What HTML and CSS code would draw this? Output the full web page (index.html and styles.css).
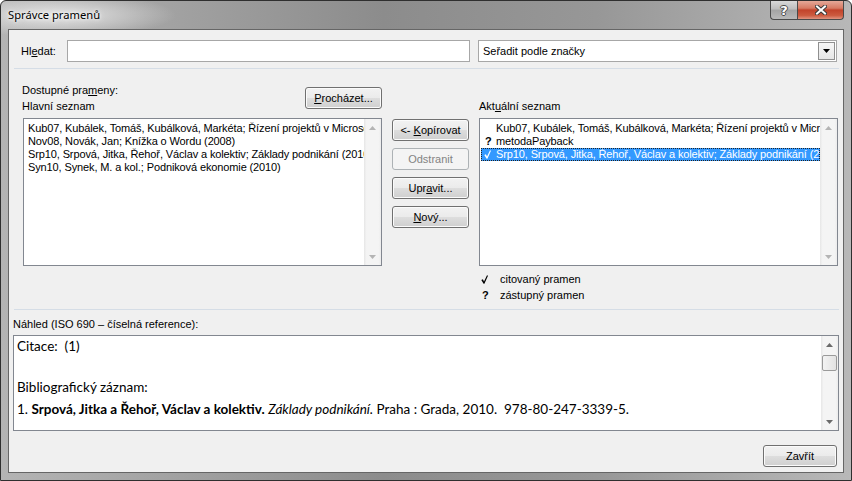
FILE: index.html
```html
<!DOCTYPE html>
<html lang="cs">
<head>
<meta charset="utf-8">
<title>Správce pramenů</title>
<link rel="stylesheet" href="styles.css">
</head>
<body>
<div class="window">
  <div class="titlebar">
    <span class="title">Správce pramenů</span>
    <div class="caption-buttons">
      <span class="cap help">?</span>
      <span class="cap close">
        <svg width="12" height="10" viewBox="0 0 12 10"><path d="M2 1.5 L10 8.5 M10 1.5 L2 8.5" stroke="#3a3a3a" stroke-width="4" stroke-linecap="square"/><path d="M2 1.5 L10 8.5 M10 1.5 L2 8.5" stroke="#ffffff" stroke-width="2" stroke-linecap="square"/></svg>
      </span>
    </div>
  </div>
  <div class="client">
    <div class="search-row">
      <label class="lbl">Hl<u>e</u>dat:</label>
      <div class="textbox search"></div>
      <div class="combo">
        <span class="combo-text">Seřadit podle značky</span>
        <span class="combo-btn"><svg width="7" height="4" viewBox="0 0 7 4"><path d="M0 0 H7 L3.5 4 Z" fill="#000"/></svg></span>
      </div>
    </div>
    <div class="sep"></div>
    <div class="sources">
      <div class="col left-col">
        <div class="col-head">
          <div class="labels">
            <div>Dostupné pra<u>m</u>eny:</div>
            <div>Hlavní seznam</div>
          </div>
          <button class="btn browse"><span><u>P</u>rocházet...</span></button>
        </div>
        <div class="listbox">
          <div class="items plain">
            <div class="item">Kub07, Kubálek, Tomáš, Kubálková, Markéta; Řízení projektů v Microsoft Project</div>
            <div class="item">Nov08, Novák, Jan; Knížka o Wordu (2008)</div>
            <div class="item">Srp10, Srpová, Jitka, Řehoř, Václav a kolektiv; Základy podnikání (2010)</div>
            <div class="item">Syn10, Synek, M. a kol.; Podniková ekonomie (2010)</div>
          </div>
          <div class="vscroll">
            <span class="arrow"><svg width="7" height="4" viewBox="0 0 7 4"><path d="M3.5 0 L7 4 H0 Z" fill="#b4b4b4"/></svg></span>
            <span class="track"></span>
            <span class="arrow"><svg width="7" height="4" viewBox="0 0 7 4"><path d="M0 0 H7 L3.5 4 Z" fill="#b4b4b4"/></svg></span>
          </div>
        </div>
      </div>
      <div class="actions">
        <button class="btn"><span>&lt;-&nbsp;<u>K</u>opírovat</span></button>
        <button class="btn disabled">Odstranit</button>
        <button class="btn"><span>Upr<u>a</u>vit...</span></button>
        <button class="btn"><span><u>N</u>ový...</span></button>
      </div>
      <div class="col right-col">
        <div class="col-head">
          <div class="labels">
            <div>Akt<u>u</u>ální seznam</div>
          </div>
        </div>
        <div class="listbox">
          <div class="items marked">
            <div class="item"><span class="mark"></span><span class="txt">Kub07, Kubálek, Tomáš, Kubálková, Markéta; Řízení projektů v Microsoft Project</span></div>
            <div class="item"><span class="mark q">?</span><span class="txt">metodaPayback</span></div>
            <div class="item selected"><span class="mark"><svg width="7" height="9" viewBox="0 0 7 9"><path d="M0.3 5 L1.9 4.2 L3 6.4 L6 0.3 L7 0.8 L3.4 8.8 L2.6 8.8 Z" fill="#fff"/></svg></span><span class="txt">Srp10, Srpová, Jitka, Řehoř, Václav a kolektiv; Základy podnikání (2010)</span></div>
          </div>
          <div class="vscroll">
            <span class="arrow"><svg width="7" height="4" viewBox="0 0 7 4"><path d="M3.5 0 L7 4 H0 Z" fill="#b4b4b4"/></svg></span>
            <span class="track"></span>
            <span class="arrow"><svg width="7" height="4" viewBox="0 0 7 4"><path d="M0 0 H7 L3.5 4 Z" fill="#b4b4b4"/></svg></span>
          </div>
        </div>
        <div class="legend">
          <div class="legend-row"><span class="mark"><svg width="7" height="9" viewBox="0 0 7 9"><path d="M0.3 5 L1.9 4.2 L3 6.4 L6 0.3 L7 0.8 L3.4 8.8 L2.6 8.8 Z" fill="#000"/></svg></span>citovaný pramen</div>
          <div class="legend-row"><span class="mark q">?</span>zástupný pramen</div>
        </div>
      </div>
    </div>
    <div class="sep"></div>
    <div class="preview-label">Náhled (ISO 690 – číselná reference):</div>
    <div class="preview">
      <div class="preview-text">
        <div class="pline">Citace:&nbsp; (1)</div>
        <div class="pline">&nbsp;</div>
        <div class="pline">Bibliografický záznam:</div>
        <div class="pline last">1. <b>Srpová, Jitka a Řehoř, Václav a kolektiv.</b> <i>Základy podnikání.</i> Praha : Grada, 2010.&nbsp; 978-80-247-3339-5.</div>
      </div>
      <div class="vscroll pscroll">
        <span class="arrow"><svg width="7" height="4" viewBox="0 0 7 4"><path d="M3.5 0 L7 4 H0 Z" fill="#6a6a6a"/></svg></span>
        <span class="thumb"></span>
        <span class="track"></span>
        <span class="arrow"><svg width="7" height="4" viewBox="0 0 7 4"><path d="M0 0 H7 L3.5 4 Z" fill="#6a6a6a"/></svg></span>
      </div>
    </div>
    <div class="footer">
      <button class="btn close-btn">Zavřít</button>
    </div>
  </div>
</div>
</body>
</html>
```

FILE: styles.css
```css
* { box-sizing: border-box; }
html, body { margin: 0; padding: 0; }
body {
  width: 852px;
  height: 481px;
  overflow: hidden;
  background: #ffffff;
  font-family: "Liberation Sans", Arial, sans-serif;
  font-size: 11px;
  color: #000;
}
u { text-decoration: underline; }

.window {
  width: 852px;
  height: 481px;
  border: 1px solid #2f2f2f;
  border-radius: 6px 6px 0 0;
  background:
    radial-gradient(ellipse 120px 22px at 55px 14px, rgba(235,235,235,0.9), rgba(235,235,235,0) 100%),
    linear-gradient(90deg, #b4b4b4 0%, #a2a2a2 20%, #8c8c8c 45%, #979797 70%, #b8b8b8 100%);
  padding: 0 7px 7px 7px;
  display: flex;
  flex-direction: column;
}

.titlebar {
  height: 28px;
  display: flex;
  align-items: flex-start;
}
.title {
  font-family: "Noto Sans", "Open Sans", sans-serif;
  font-size: 11.2px;
  line-height: 28px;
  color: #000;
  text-shadow: 0 0 6px #ffffff, 0 0 3px #ffffff;
}
.caption-buttons {
  margin-left: auto;
  display: flex;
  height: 19px;
}
.cap {
  height: 19px;
  display: flex;
  align-items: center;
  justify-content: center;
  border: 1px solid #4a4a4a;
  border-top: none;
}
.help {
  width: 27px;
  border-radius: 0 0 0 4px;
  border-right: none;
  background: linear-gradient(#d9d9d9 0%, #bdbdbd 45%, #a4a4a4 50%, #b9b9b9 100%);
  color: #fff;
  font-family: "DejaVu Sans", sans-serif;
  font-weight: bold;
  font-size: 13px;
  text-shadow: 1px 0 0 #4a4a4a, -1px 0 0 #4a4a4a, 0 1px 0 #4a4a4a, 0 -1px 0 #4a4a4a;
}
.close {
  width: 47px;
  border-radius: 0 0 4px 0;
  background: linear-gradient(#e5a898 0%, #d67a63 40%, #c2432b 50%, #cc5a3f 80%, #e19480 100%);
}

.client {
  flex: 1;
  background: #f0f0f0;
  border: 1px solid #666666;
  display: flex;
  flex-direction: column;
}

.search-row {
  display: flex;
  align-items: center;
  padding: 10px 5px 0 12px;
}
.lbl {
  width: 46px;
  line-height: 22px;
}
.textbox {
  height: 22px;
  background: #fff;
  border: 1px solid #a7a7a7;
}
.search { width: 403px; margin-right: 8px; }
.combo {
  width: 359px;
  height: 22px;
  background: #fff;
  border: 1px solid #a7a7a7;
  display: flex;
  align-items: center;
  padding: 0 1px 0 4px;
}
.combo-text { flex: 1; }
.combo-btn {
  width: 17px;
  height: 18px;
  border: 1px solid #8f8f8f;
  background: linear-gradient(#f6f6f6, #e6e6e6);
  display: flex;
  align-items: center;
  justify-content: center;
}

.sep {
  height: 1px;
  background: #d5dde6;
  margin: 6px 4px 0 5px;
}

.sources {
  display: flex;
  padding: 13px 0 0 14px;
}
.col { width: 359px; display: flex; flex-direction: column; }
.col-head {
  height: 32px;
  margin-bottom: 4px;
  display: flex;
  justify-content: space-between;
  align-items: flex-start;
}
.labels {
  height: 32px;
  display: flex;
  flex-direction: column;
  justify-content: flex-end;
  line-height: 16px;
}
.left-col .labels { margin-left: -1px; }

.btn {
  height: 22px;
  border: 1px solid #707070;
  border-radius: 3px;
  background: linear-gradient(#f2f2f2 0%, #ebebeb 48%, #dddddd 52%, #cfcfcf 100%);
  box-shadow: inset 0 0 0 1px #fbfbfb;
  font-family: "Liberation Sans", Arial, sans-serif;
  font-size: 11px;
  color: #000;
  padding: 0;
  cursor: default;
  white-space: nowrap;
}
.btn.disabled {
  border-color: #adb2b5;
  background: #f4f4f4;
  box-shadow: none;
  color: #838383;
}
.browse { width: 77px; margin-top: 5px; }

.listbox {
  height: 148px;
  border: 1px solid #828790;
  background: #fff;
  display: flex;
}
.items {
  flex: 1;
  min-width: 0;
  overflow: hidden;
  padding-top: 3px;
  letter-spacing: -0.12px;
}
.items.plain { padding-left: 4px; }
.items.marked { padding-left: 1px; }
.item {
  line-height: 13px;
  height: 13px;
  white-space: nowrap;
  overflow: hidden;
  display: flex;
}
.mark {
  width: 15px;
  flex: none;
  display: flex;
  align-items: center;
  padding-left: 3px;
  font-weight: bold;
}
.mark.q { padding-left: 4px; }
.txt { white-space: nowrap; }
.item.selected {
  background: #3399ff;
  color: #fff;
  outline: 1px dotted #222;
  outline-offset: -1px;
}

.vscroll {
  width: 17px;
  flex: none;
  display: flex;
  flex-direction: column;
  background: linear-gradient(90deg, #e6e6e6 0%, #f4f4f4 15%, #f4f4f4 85%, #ececec 100%);
}
.arrow {
  height: 17px;
  display: flex;
  align-items: center;
  justify-content: center;
}
.track { flex: 1; }

.actions {
  width: 77px;
  margin-left: 10px;
  display: flex;
  flex-direction: column;
  gap: 7px;
  padding-top: 37px;
}
.right-col { margin-left: 10px; }

.legend {
  margin-top: 5px;
  line-height: 16px;
}
.legend-row { display: flex; align-items: center; }
.legend-row .mark { width: 21px; padding-left: 2px; }
.legend-row .mark.q { padding-left: 3px; }

.preview-label {
  margin-top: 6px;
  padding-left: 4px;
  line-height: 16px;
}
.preview {
  margin: 3px 4px 0 4px;
  height: 96px;
  border: 1px solid #828790;
  background: #fff;
  display: flex;
}
.preview-text {
  flex: 1;
  padding: 0 0 0 3px;
  font-family: Lato, "Open Sans", sans-serif;
  font-size: 13.5px;
  line-height: 20.5px;
  white-space: nowrap;
  overflow: hidden;
}
.pline.last { margin-top: 1px; }
.pscroll .thumb {
  height: 16px;
  margin: 2px 1px 0 1px;
  border: 1px solid #9a9a9a;
  border-radius: 2px;
  background: linear-gradient(90deg, #f3f3f3, #e2e2e2);
}

.footer {
  margin-top: 14px;
  display: flex;
  justify-content: flex-end;
  padding-right: 6px;
}
.close-btn { width: 74px; }
```
